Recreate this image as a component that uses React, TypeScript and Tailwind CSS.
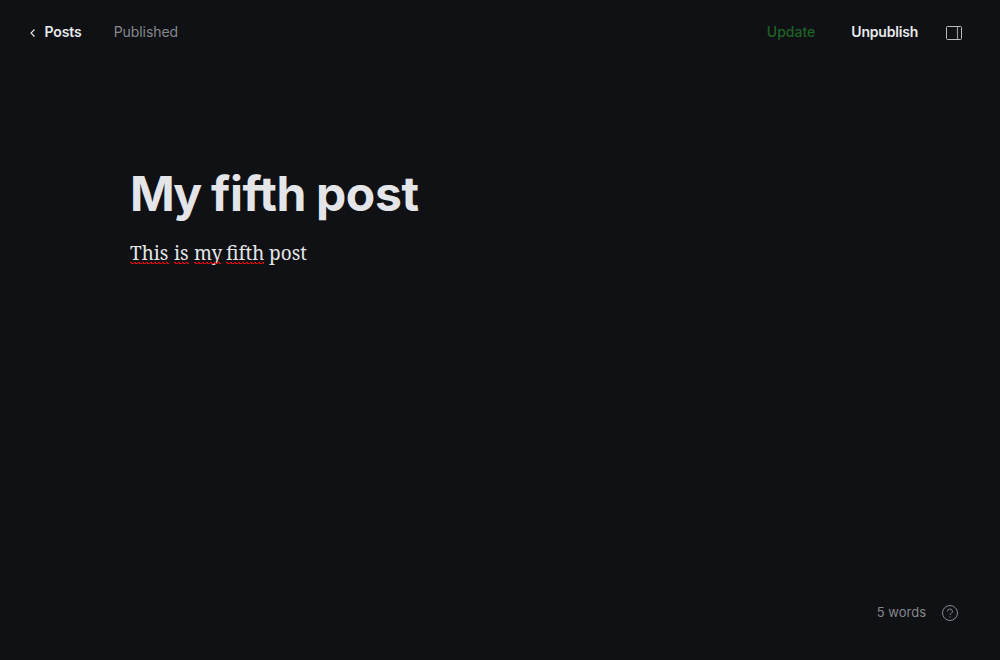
function Misspelled({ text, className }: { text: string; className: string }) {
  return (
    <span className={`relative inline-block ${className}`}>
      {text}
      <svg className="absolute left-0 top-[25px] h-[2px] w-full" shapeRendering="crispEdges">
        <defs>
          <pattern id={`wave-${text}`} width="4" height="2" patternUnits="userSpaceOnUse">
            <path fill="#e00808" d="M0 0h2v1H0zM1 1h3v1H1z" />
          </pattern>
        </defs>
        <rect width="100%" height="2" fill={`url(#wave-${text})`} />
      </svg>
    </span>
  );
}

export default function App() {
  return (
    <div className="flex h-[660px] w-full flex-col bg-[#101114] font-['Inter',sans-serif]">
      <header className="flex h-16 items-center pl-7 pr-[38px] text-[14px] leading-5">
        <a className="flex items-center font-semibold text-[#e8eaec]">
          <svg className="mr-[6.5px] mt-[2px] h-[8px] w-[10px]" viewBox="0 0 10 8" fill="none" stroke="currentColor" strokeWidth="1.1">
            <path d="M6.5 0.5 3 4l3.5 3.5" />
          </svg>
          <span className="tracking-[-0.1px]">Posts</span>
        </a>
        <span className="ml-8 tracking-[-0.06px] text-[#84888e]">Published</span>
        <span className="ml-auto font-medium text-[#1f6226]">Update</span>
        <span className="ml-9 font-semibold tracking-[-0.2px] text-[#e8eaec]">Unpublish</span>
        <svg className="ml-7 mt-[2px] size-4" viewBox="0 0 16 16" fill="none">
          <rect x="0.5" y="1.5" width="15" height="13" rx="1" stroke="#b9bbbe" />
          <path d="M11.5 2v12" stroke="#929498" strokeWidth="1.2" />
        </svg>
      </header>
      <main className="flex-1 px-[130px] pt-[100px]">
        <h1 className="flex text-[48px] font-bold leading-[60px] text-[#e3e5e8] [font-variant-ligatures:none]">
          <span className="w-[81px] tracking-[-2px]">My</span>
          <span className="w-[105px] tracking-[-0.5px]">fifth</span>
          <span className="tracking-[-0.4px]">post</span>
        </h1>
        <p className="mt-[13px] flex font-['Noto_Serif','Liberation_Serif',serif] text-[19px] leading-8 text-[#e3e5e8]">
          <Misspelled text="This" className="w-[39px]" />
          <Misspelled text="is" className="ml-[5px] w-[15px]" />
          <Misspelled text="my" className="ml-[5px] w-[27px]" />
          <Misspelled text="fifth" className="ml-[5px] w-[38px]" />
          <span className="ml-[5px]">post</span>
        </p>
      </main>
      <footer className="flex h-[94px] items-center justify-end pr-[42px] text-[13px] text-[#85888d]">
        5 words
        <svg className="ml-4 size-4" viewBox="0 0 16 16" fill="none" stroke="currentColor">
          <circle cx="8" cy="8" r="7.5" />
          <path d="M5.6 6.4a2.4 2.4 0 1 1 3.5 2.1C8.3 8.9 8 9.1 8 10M8 11.4v1.1" />
        </svg>
      </footer>
    </div>
  );
}
